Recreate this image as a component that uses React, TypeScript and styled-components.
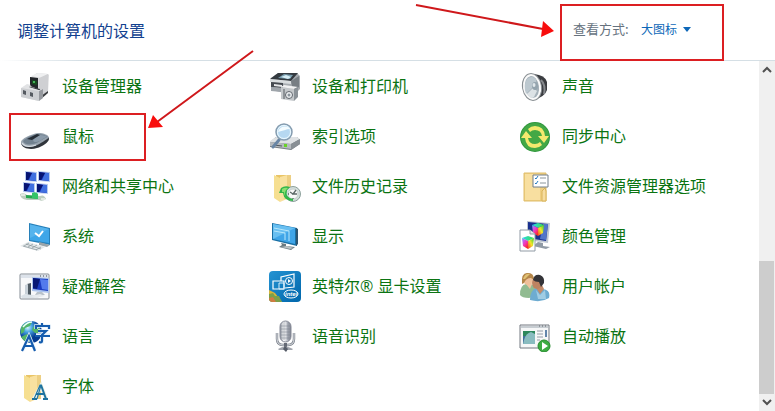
import React from "react";
import styled, { createGlobalStyle } from "styled-components";

const GlobalStyle = createGlobalStyle`
  * { box-sizing: border-box; }
  body {
    margin: 0;
    background: #fff;
    font-family: "Noto Sans CJK SC", "Microsoft YaHei", sans-serif;
  }
`;

const Page = styled.main`
  position: relative;
  display: flex;
  flex-direction: column;
  height: 100vh;
  overflow: hidden;
  background: #fff;
`;

const Header = styled.header`
  display: flex;
  flex: none;
  align-items: center;
  justify-content: space-between;
  height: 60px;
  padding: 0 51px 0 17px;
`;

const Title = styled.h1`
  margin: 0;
  color: #12418f;
  font-size: 16px;
  font-weight: 400;
  line-height: 24px;
`;

const Divider = styled.div`
  flex: none;
  height: 1px;
  background: linear-gradient(to right, #fff, #d5dfe5 80px);
`;

const Mark = styled.span`
  position: absolute;
  border: 2px solid #dc1f22;
  pointer-events: none;
`;

const ViewMark = styled(Mark)`
  inset: -13px 0 -18px 0;
`;

const ItemMark = styled(Mark)`
  inset: 2px 113px 0 0;
`;

const ViewControl = styled.div`
  position: relative;
  display: flex;
  align-items: center;
  height: 26px;
  width: 164px;
  padding: 0 0 2px 13px;
  color: #66727e;
  font-size: 13px;
  line-height: 20px;
`;

const ViewLabel = styled.label`
  flex: none;
  width: 68px;
`;

const ViewSelect = styled.select`
  appearance: none;
  margin: 0;
  padding: 0;
  border: 0;
  background: transparent;
  color: #0d67b8;
  font: inherit;
  font-size: 12px;
`;

const Caret = styled.svg`
  flex: none;
  width: 8px;
  height: 5px;
  margin-left: 5px;
`;

const Content = styled.div`
  display: flex;
  flex: 1;
  min-height: 0;
`;

const Items = styled.ul`
  display: grid;
  flex: 1;
  grid-template-columns: repeat(3, minmax(0, 1fr));
  grid-auto-rows: 50px;
  margin: 0;
  padding: 0 0 0 9px;
  list-style: none;
`;

const Item = styled.li`
  position: relative;
  display: flex;
  align-items: center;
`;

const ItemLink = styled.a`
  display: flex;
  align-items: center;
  gap: 11px;
  padding-left: 10px;
  color: #0b7412;
  font-family: "Open Sans", "Noto Sans CJK SC", sans-serif;
  font-size: 16px;
  line-height: 24px;
  text-decoration: none;
  white-space: nowrap;
`;

const Picture = styled.svg`
  flex: none;
  width: 32px;
  height: 32px;
`;

const ScrollBar = styled.div`
  display: flex;
  flex: none;
  flex-direction: column;
  width: 16px;
  background: #f0f0f0;
`;

const ScrollButton = styled.button`
  display: flex;
  align-items: center;
  justify-content: center;
  height: 17px;
  padding: 0;
  border: 0;
  background: transparent;
`;

const ScrollTrack = styled.div`
  display: flex;
  flex: 1;
  flex-direction: column;
  justify-content: flex-end;
`;

const ScrollThumb = styled.div`
  height: 42%;
  margin-right: 1px;
  background: #cdcdcd;
`;

const Arrows = styled.svg`
  position: absolute;
  top: 0;
  left: 0;
  width: 775px;
  height: 411px;
  pointer-events: none;
`;

const DeviceManager = () => (
  <>
    <path d="M12 7 18 3 29 4 30 5 29 22 18 24Z" fill="#d9dadc" />
    <path d="M12 6 19 3 29 4 22 8Z" fill="#eff0f1" />
    <path d="M20 8 29 4v18l-9 5Z" fill="#cfd0d3" />
    <path d="M22 26 29 21v2l-7 6Z" fill="#3a3c3f" />
    <path d="M11 7l8 1v11l-8-3Z" fill="#23272a" />
    <path d="M13 10l5 1v4l-5-1Z" fill="#174c1e" />
    <path d="M14 11h2v2h-2Z" fill="#45b45a" />
    <path d="M8 16l13 3 1 3-14-3Z" fill="#303438" />
    <path d="M2 18 8 14l4 1-2 2 10 3 3-1v3l-3 9L2 27Z" fill="#e2e3e5" />
    <path d="M2 18l18 3v10L2 27Z" fill="#cdcfd2" />
    <path d="M20 21l4-2v9l-4 3Z" fill="#96999e" />
    <path d="M4 20l3 1v4l-3-1Zm7 2 3 1v4l-3-1Z" fill="#555a60" />
  </>
);

const Mouse = () => (
  <>
    <path d="M2 23c1 6 10 7 16 5 5-1 12-6 12-9v-2Z" fill="#30353b" />
    <path d="M2 22c0-3 10-8 17-9 6 0 11 2 11 5-3 1-8 6-14 8-7 2-14 1-14-4Z" fill="#97a3ae" />
    <path d="M4 21c3-3 10-7 15-7 4 0 8 1 10 3-5 1-9 6-15 7-5 1-9 0-10-3Z" fill="#71818f" />
    <path d="M16 18l5-3c4 0 6 1 7 2-4 1-7 5-11 5-3 0-4-2-1-4Z" fill="#8b9baa" />
    <path d="M8 19l10-5 3 1-8 5Z" fill="#252d36" />
    <path d="M3 23c3 4 9 4 14 2" fill="none" stroke="#d5dce2" strokeWidth="1.300" />
  </>
);

const NetworkCenter = () => (
  <>
    {[[6, 1], [19, 1], [4, 12], [17, 13]].map(([x, y]) => (
      <g key={`${x}-${y}`}>
        <path d={`M${x} ${y}l12 1 0 10-12-1Z`} fill="#b9cdf0" />
        <path d={`M${x + 1} ${y + 1}l10 1 0 8-10-1Z`} fill="#1530b8" />
        <path d={`M${x + 7} ${y + 2}l4 0 0 8-7-1Z`} fill="#4070e0" />
        <path d={`M${x + 1} ${y + 1}l6 1-4 7-2 0Z`} fill="#071472" />
      </g>
    ))}
    <path d="M1 24q4-2 7 1l13 1q4-2 6 3-4 3-7 1H8Q1 29 1 24Z" fill="#bccdbf" />
    <path d="M7 25l12 1v3L7 28Z" fill="#26a650" />
    <path d="M13 23q4-2 6 1v5l-6-1Z" fill="#35c568" />
    <path d="M2 25h4m16 4h4" stroke="#edf2ed" strokeWidth="1.5" />
  </>
);

const System = () => (
  <>
    <path d="M10 3 31 8v17l-21-4Z" fill="#2780b9" />
    <path d="M11 4.500 30 9v14l-19-3Z" fill="#3ea6e8" />
    <path d="M11 4.500 30 9 11 18Z" fill="#56b4ed" />
    <path d="M16 13l4 3 4-5" fill="none" stroke="#fff" strokeWidth="2" />
    <path d="M20 22v3l8 2 3-2-7-2Z" fill="#9aa5aa" />
    <path d="M1 26 9 22l17 5-7 4Z" fill="#e2e7e9" />
    <path d="M4 26l14 4m-11-6 15 5m-17-3 5-3m-1 4 5-3m-1 4 5-3m-1 5 5-3" stroke="#8a969b" strokeWidth=".7" />
  </>
);

const Troubleshoot = () => (
  <>
    <rect x="1" y="4" width="29" height="25" rx="1" fill="#f7f8fa" stroke="#848c95" />
    <path d="M2 5h27v3H2Z" fill="#dce2ea" />
    <path d="M21 6h1m2 0h1m2 0h1" stroke="#454b52" />
    <path d="M13 7l17 1v15l-17-2Z" fill="#abc3ec" />
    <path d="M14 8l15 1v12l-15-2Z" fill="#1b3cc1" />
    <path d="M14 8l7 1-3 10-4-1Z" fill="#081875" />
    <path d="M21 9l8 1v10l-6-1Z" fill="#537bec" />
    <path d="M18 22h5l3 3H16Z" fill="#b8c1ca" />
    <path d="M8 14l4-1v13l-4-1Z" fill="#4e5962" />
    <path d="M6 15l3-1v11l-3-1Z" fill="#c8d1d9" />
    <path d="M2 26l4-2 16 2-4 2H3Z" fill="#dce3e9" />
    <path d="M12 26l9-2 5 2-10 2Z" fill="#e6eaee" />
  </>
);

const Language = () => (
  <>
    <defs>
      <radialGradient id="globe" cx="35%" cy="30%">
        <stop stopColor="#d4f5ff" /><stop offset=".4" stopColor="#47a6e3" /><stop offset="1" stopColor="#063c91" />
      </radialGradient>
    </defs>
    <circle cx="12" cy="12" r="11" fill="url(#globe)" />
    <path d="M3 6q5-5 10-4l-2 4-5 2-1 4-3 2q-1-5 1-8Zm11 1 5-3q3 5 2 9l-5 0-3-3ZM2 17l6-3 5 3-3 5q-5 0-8-5Z" fill="#53b568" />
    <path d="M4 7q4-5 9-5" stroke="#eaffff" strokeWidth="1.4" fill="none" />
    <g fill="none" stroke="#e9f4fc" strokeWidth="3.500">
      <path d="M4 30 10 16l6 14" />
      <path d="M17 9V6h13v3M19 11h8l-4 4v7h-3m-3-7h14" />
    </g>
    <g fill="none" stroke="#155cae" strokeWidth="2.200">
      <path d="M3 31 10 16l6 15M6 26h8" />
      <path d="M17 9V6h13v3M23 3v3M19 11h8l-4 4v6q0 2-3 1m-4-6h15" />
    </g>
  </>
);

const Folder = () => (
  <>
    <path d="M7 5h15v24H7Z" fill="#e9c466" />
    <path d="M5 5l6 3v24l-6-4Z" fill="#f6df91" />
    <path d="M11 7 18 5v24l-7 3Z" fill="#f9e1a0" />
    <path d="M18 5h4v24h-8l4-2Z" fill="#edcf83" />
  </>
);

const Fonts = () => (
  <>
    <Folder />
    <path d="M15 29 22 16l5 13" fill="none" stroke="#eff3e6" strokeWidth="4" />
    <path d="M15 29 21 15h1l-4 14" fill="none" stroke="#2578a5" strokeWidth="1.200" />
    <path d="M22 15l5 14m-10-5h8m-12 5h5m6 0h5" fill="none" stroke="#1e739f" strokeWidth="2" />
  </>
);

const Printer = () => (
  <>
    <path d="M2 8 9 3h19l3 3v13l-6 6L2 20Z" fill="#a6abb0" />
    <path d="M1 9 9 3h20l-7 8Z" fill="#343a40" />
    <path d="M9 8l6-4 9 1-3 4Z" fill="#799eb0" />
    <path d="M12 7l5-2 5 2-3 2Z" fill="#d6edf5" />
    <path d="M1 9l21 2v3L1 12Z" fill="#d9dddf" />
    <path d="M22 11l8-5v11l-6 4Z" fill="#777e84" />
    <path d="M2 12l12 1v5L2 17Z" fill="#454a50" />
    <path d="M5 14l8 1v2l-8-1Z" fill="#e5e7e9" />
    <path d="M2 17l11 1v4L2 21Z" fill="#9fa5ab" />
    <path d="M12 17l13 2v12l-13-2Z" fill="#c4c8cb" />
    <path d="M12 17l3-2 14 2-4 2Z" fill="#f0f1f2" />
    <path d="M25 19l4-2v10l-4 4Z" fill="#8b9298" />
    <path d="M15 19v10" stroke="#565d63" />
    <circle cx="20" cy="25" r="3.500" fill="#eef0f2" stroke="#60666d" />
    <circle cx="20" cy="25" r="1.500" fill="#8a949c" />
  </>
);

const Indexing = () => (
  <>
    <path d="M1 22 7 17h21l3 3v4l-9 6L1 27Z" fill="#777e84" />
    <path d="M1 21 7 17h21l3 2-9 5-21-2Z" fill="#dfe2e4" />
    <path d="M1 22l21 2v5L1 26Z" fill="#b5babe" />
    <path d="M22 24l9-5v5l-9 6Z" fill="#888f94" />
    <path d="M5 25l8 1" stroke="#4e555b" />
    <path d="M15 24h3v3h-3Z" fill="#67d326" />
    <path d="M4 27 10 20" stroke="#6986a5" strokeWidth="3" strokeLinecap="round" />
    <circle cx="15" cy="12" r="8" fill="#c9e9f9" stroke="#869caf" strokeWidth="1.500" />
    <circle cx="15" cy="12" r="6.500" fill="#b6d8f1" stroke="#edf9ff" />
    <path d="M9 12c2-6 8-7 12-3-4 0-7 2-12 3Z" fill="#f4fcff" />
  </>
);

const FileHistory = () => (
  <>
    <Folder />
    <circle cx="24" cy="24" r="7.500" fill="#d3dedb" stroke="#8ca09b" />
    <circle cx="24" cy="24" r="5" fill="#f8f9f8" stroke="#c4cfcc" />
    <path d="M27 20l-3 4h4M21 22l3 2M24 28v1m-5-5h1" stroke="#5b6867" strokeWidth="1.300" fill="none" />
    <path d="M12 18q4-3 9-1l-3 3q-2 8 6 9v2q-9 0-10-8l-4 0Z" fill="#31b64a" />
    <path d="M13 19q3-2 6-1-5 4-2 9-2-2-2-5h-2Z" fill="#8cde70" />
  </>
);

const Display = () => (
  <>
    <path d="M3 3 28 8v18L3 20Z" fill="#196fa4" />
    <path d="M4 4l22 4v16L4 19Z" fill="#3fa5e8" />
    <path d="M4 4l22 4L4 19Z" fill="#68bff1" />
    <path d="M27 8l2 1v15l-2 2Z" fill="#2d5570" />
    <path d="M5 8l15 3v10M5 11l11 2v7" fill="none" stroke="#b7e7fb" />
    <path d="M12 23l5 1v2l9 1-4 3-12-3 3-2Z" fill="#697980" />
    <path d="M12 27l6-1 7 2-4 1Z" fill="#bac2c5" />
  </>
);

const IntelText = styled.text`
  font: italic 700 6px "Liberation Sans", sans-serif;
`;

const Intel = () => (
  <>
    <defs>
      <linearGradient id="intel-bg" x2="1" y2="1"><stop stopColor="#2593d2" /><stop offset="1" stopColor="#0066ab" /></linearGradient>
      <clipPath id="intel-clip"><rect x="0" y="1" width="32" height="31" rx="4" /></clipPath>
    </defs>
    <rect x="0" y="1" width="32" height="31" rx="4" fill="url(#intel-bg)" />
    <g clipPath="url(#intel-clip)">
      <path d="M0 20l6 3 7 9H0Z" fill="#d9b537" />
      <path d="M0 24l4-1 2 3 4 0 3 6H0Z" fill="#7ba04a" />
      <path d="M0 28l4-1 3 5H0Z" fill="#d07b42" />
    </g>
    <path d="M12 11V7L25 4v13l-9 1M4 11h11v8H4Z" fill="none" stroke="#fff" strokeWidth="1.200" />
    <path d="M10 13h5v6h-5Z" fill="none" stroke="#d6effc" />
    <circle cx="20" cy="11" r="3.500" fill="#1478b9" stroke="#fff" />
    <path d="M19 9l3 2-3 2Z" fill="#fff" />
    <ellipse cx="22" cy="24" rx="7" ry="4" fill="#0b70b4" stroke="#fff" />
    <IntelText x="16" y="26" fill="#fff">intel</IntelText>
  </>
);

const Microphone = () => (
  <>
    <defs>
      <linearGradient id="mic-metal"><stop stopColor="#858b97" /><stop offset=".35" stopColor="#fff" /><stop offset=".6" stopColor="#c8cbd2" /><stop offset="1" stopColor="#777c89" /></linearGradient>
    </defs>
    <rect x="11" y="1" width="11" height="21" rx="5.500" fill="url(#mic-metal)" stroke="#858996" />
    <path d="M12 6h9m-9 3h9m-9 3h9m-9 3h9m-9 3h9M15 2v18m4-18v18" stroke="#777c88" strokeWidth=".5" />
    <path d="M8 13v6q0 6 6 6h5q6 0 6-6v-6" fill="none" stroke="#777d88" strokeWidth="2.400" />
    <path d="M8 13v6q0 6 6 6h5q6 0 6-6v-6" fill="none" stroke="#e4e7ea" />
    <path d="M15 23h3v7h-3Z" fill="#656a75" />
    <path d="M9 29q7-5 15 0l-1 1H10Z" fill="#a2a6ae" />
    <path d="M14 29l2-3 3 3-2 3Z" fill="#565c68" />
  </>
);

const Speaker = () => (
  <>
    <path d="M15 4q11 1 13 8v8q-2 7-14 10Z" fill="#3a3c40" />
    <path d="M22 10q5 5 3 14" fill="none" stroke="#85888c" strokeWidth="2" />
    <ellipse cx="13" cy="17" rx="10" ry="14" fill="#898f93" transform="rotate(-9 13 17)" />
    <ellipse cx="13" cy="17" rx="9" ry="13" fill="#fafafa" transform="rotate(-9 13 17)" />
    <ellipse cx="13" cy="17" rx="7" ry="11" fill="#a5b1b9" transform="rotate(-9 13 17)" />
    <path d="M8 9q5-4 9 0l0 7-4 2-6 6q-3-9 1-15Z" fill="#bcc8cf" />
    <path d="M14 18l-6 6q4 6 7 3l3-6Z" fill="#dce2e5" />
    <ellipse cx="16" cy="16" rx="3" ry="4" fill="#94a4ae" />
    <ellipse cx="15" cy="15" rx="1.500" ry="2" fill="#e1e8eb" />
  </>
);

const Sync = () => (
  <>
    <circle cx="16" cy="17" r="15" fill="#2e963c" />
    <circle cx="16" cy="17" r="14" fill="#43a845" />
    <path d="M6 18H2l5-7 6 7H9q1 6 7 6 3 0 5-2l2 3q-3 3-7 3Q7 28 6 18Z" fill="#f4e96e" />
    <path d="M26 16h4l-5 7-6-7h4q-1-6-7-6-3 0-5 2l-2-3q3-3 7-3 9 0 10 10Z" fill="#f4e96e" />
  </>
);

const ExplorerOptions = () => (
  <>
    <path d="M5 3h22v28H5Z" fill="#efcf82" stroke="#dfbd6b" />
    <path d="M8 4h13v26H8Z" fill="#f8dfa0" />
    <path d="M14 5h15v12H14Z" fill="#fff" stroke="#737f8a" />
    <path d="M16 8l1 1 2-3m-3 7 1 1 2-3" fill="none" stroke="#267bbf" />
    <path d="M21 8h6m-6 5h6" stroke="#8c969b" />
    <path d="M23 21l3-3 1 3v10h-4Z" fill="#f7dda0" stroke="#d8b35a" />
    <path d="M7 4v26" stroke="#fff0bd" />
  </>
);

const ColorCube = ({ x, y }: { x: number; y: number }) => (
  <>
    <defs>
      <linearGradient id={`left-${x}`} x2=".7" y2="1"><stop stopColor="#24d4e8" /><stop offset=".25" stopColor="#bb67f5" /><stop offset=".6" stopColor="#f435b0" /><stop offset="1" stopColor="#f62d22" /></linearGradient>
      <linearGradient id={`right-${x}`} x1="0" y1="1" x2="1" y2="0"><stop stopColor="#f63729" /><stop offset=".5" stopColor="#f4e72b" /><stop offset="1" stopColor="#30ce35" /></linearGradient>
      <linearGradient id={`top-${x}`} x2="1"><stop stopColor="#24d8ef" /><stop offset="1" stopColor="#42df43" /></linearGradient>
    </defs>
    <path d={`M${x} ${y + 2}l6-2 6 2-6 3Z`} fill={`url(#top-${x})`} />
    <path d={`M${x} ${y + 2}l6 3v8l-5-3Z`} fill={`url(#left-${x})`} />
    <path d={`M${x + 12} ${y + 2}l-6 3v8l5-3Z`} fill={`url(#right-${x})`} />
  </>
);

const ColorManagement = () => (
  <>
    <path d="M8 1 31 3l-2 20-21-3Z" fill="#bec6d1" />
    <path d="M9 2l20 2-2 17-18-3Z" fill="#19308f" />
    <path d="M24 4l5 0-2 16-6-1Z" fill="#5275c8" />
    <path d="M19 22l5 1v3l7 1-4 2-13-3Z" fill="#919ba6" />
    <ColorCube x={13} y={3} />
    <path d="M1 10h10l5 4v17H1Z" fill="#fff" stroke="#919ba5" />
    <path d="M11 10v4h5" fill="#dfe5ea" stroke="#919ba5" />
    <ColorCube x={3} y={16} />
  </>
);

const Users = () => (
  <>
    <path d="M1 25q0-10 6-11h5q7 2 5 12l-7 2Q3 28 1 25Z" fill="#91bb91" />
    <path d="M7 14l4 5 2-5-1-4H7Z" fill="#efc5a0" />
    <ellipse cx="9" cy="9" rx="5" ry="6" fill="#efc09a" />
    <path d="M3 14Q2 3 8 3q7-1 7 7l-3-2q-5 0-7 5Z" fill="#b48649" />
    <path d="M4 9q2-6 7-5l-5 5Z" fill="#e0c174" />
    <path d="M11 29q0-8 6-11l7 1q8 1 6 9-8 5-19 2Z" fill="#6eacd1" />
    <path d="M17 18l4 6 4-5-2-4h-5Z" fill="#c48b69" />
    <ellipse cx="18" cy="13" rx="5" ry="6" fill="#bd8361" />
    <path d="M14 10q1-6 7-5 5 2 4 8l-3 4-2-5q-4 0-6-2Z" fill="#343438" />
    <path d="M17 20l4 5 5-5 1 9h-8Z" fill="#a0cce3" />
  </>
);

const AutoPlay = () => (
  <>
    <path d="M1 5h29v23H1Z" fill="#f6f7f8" stroke="#737980" />
    <path d="M2 6h27v2H2Z" fill="#c7cdd2" />
    <path d="M20 6h1m2 0h1m2 0h1" stroke="#5b6268" />
    <path d="M4 11h12v13H4Z" fill="#426d9e" />
    <path d="M4 11h12v5H4Z" fill="#2c875c" />
    <path d="M5 20q2-7 7-8l4 2v10H4Z" fill="#89bcc0" />
    <path d="M18 11h6m-6 3h6m-6 3h6m-6 3h3" stroke="#939ca5" />
    <path d="M27 10v7" stroke="#315f92" strokeWidth="1.500" />
    <circle cx="25" cy="26" r="6" fill="#3cab42" stroke="#278b2e" />
    <path d="M23 22l6 4-6 4Z" fill="#fff" />
  </>
);

const entries: { label: string; icon: React.ComponentType; marked?: boolean }[] = [
  { label: "设备管理器", icon: DeviceManager },
  { label: "设备和打印机", icon: Printer },
  { label: "声音", icon: Speaker },
  { label: "鼠标", icon: Mouse, marked: true },
  { label: "索引选项", icon: Indexing },
  { label: "同步中心", icon: Sync },
  { label: "网络和共享中心", icon: NetworkCenter },
  { label: "文件历史记录", icon: FileHistory },
  { label: "文件资源管理器选项", icon: ExplorerOptions },
  { label: "系统", icon: System },
  { label: "显示", icon: Display },
  { label: "颜色管理", icon: ColorManagement },
  { label: "疑难解答", icon: Troubleshoot },
  { label: "英特尔® 显卡设置", icon: Intel },
  { label: "用户帐户", icon: Users },
  { label: "语言", icon: Language },
  { label: "语音识别", icon: Microphone },
  { label: "自动播放", icon: AutoPlay },
  { label: "字体", icon: Fonts },
];

export default function App() {
  return (
    <>
      <GlobalStyle />
      <Page>
        <Header>
          <Title>调整计算机的设置</Title>
          <ViewControl>
            <ViewLabel htmlFor="view">查看方式:</ViewLabel>
            <ViewSelect id="view" defaultValue="large">
              <option value="large">大图标</option>
              <option value="small">小图标</option>
            </ViewSelect>
            <Caret viewBox="0 0 8 5" aria-hidden="true">
              <path d="M0 0h8L4 5Z" fill="#0d67b8" />
            </Caret>
            <ViewMark />
          </ViewControl>
        </Header>
        <Divider />
        <Content>
          <Items>
            {entries.map(({ label, icon: Icon, marked }) => (
              <Item key={label}>
                <ItemLink href="#">
                  <Picture viewBox="0 0 32 32" aria-hidden="true"><Icon /></Picture>
                  {label}
                </ItemLink>
                {marked && <ItemMark />}
              </Item>
            ))}
          </Items>
          <ScrollBar>
            <ScrollButton aria-label="向上滚动">
              <svg width="10" height="7" viewBox="0 0 10 7"><path d="M1 6l4-4 4 4" fill="none" stroke="#505050" strokeWidth="2" /></svg>
            </ScrollButton>
            <ScrollTrack><ScrollThumb /></ScrollTrack>
            <ScrollButton aria-label="向下滚动">
              <svg width="10" height="7" viewBox="0 0 10 7"><path d="M1 1l4 4 4-4" fill="none" stroke="#505050" strokeWidth="2" /></svg>
            </ScrollButton>
          </ScrollBar>
        </Content>
        <Arrows viewBox="0 0 775 411" aria-hidden="true">
          <path d="M253 51 157 122M416 5l127 24" stroke="#cf181b" strokeWidth="2" fill="none" />
          <path d="M148 128l5-13 10 12ZM554 31l-11-10-2 16Z" fill="#f80d0d" />
        </Arrows>
      </Page>
    </>
  );
}
